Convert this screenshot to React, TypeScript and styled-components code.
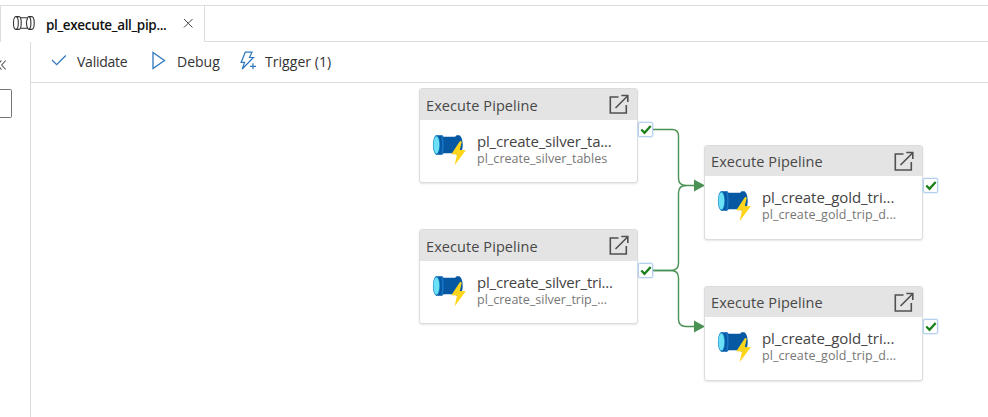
import React from "react";
import styled, { createGlobalStyle } from "styled-components";

const GlobalStyle = createGlobalStyle`
  * { box-sizing: border-box; }
  body { margin: 0; background: #fff; font-family: "Open Sans", "Noto Sans", sans-serif; }
`;

const Page = styled.div`
  display: flex;
  flex-direction: column;
  width: 988px;
  height: 417px;
  padding-top: 5px;
  overflow: hidden;
  background: #fff;
`;
const TabBar = styled.div`
  display: flex;
  height: 37px;
  border-top: 1px solid #dcdcdc;
`;
const Tab = styled.div`
  display: flex;
  align-items: center;
  width: 205px;
  padding: 0 0 2px 11px;
  border: solid #dcdcdc;
  border-width: 0 1px;
`;
const TabTitle = styled.span`
  width: 137px;
  margin-left: 10px;
  padding-top: 3px;
  font-size: 13.5px;
  font-weight: 600;
  letter-spacing: -0.35px;
  line-height: 20px;
  white-space: nowrap;
  color: #111;
`;
const TabFill = styled.div`
  flex: 1;
  border-bottom: 1px solid #dcdcdc;
`;
const Body = styled.div`
  display: flex;
  flex: 1;
`;
const SidePanel = styled.div`
  display: flex;
  flex-direction: column;
  width: 31px;
  padding-top: 18px;
  border-right: 1px solid #dcdcdc;
`;
const SearchBox = styled.div`
  width: 12px;
  height: 29px;
  margin-top: 19px;
  border: 1px solid #76747a;
  border-left: 0;
  border-radius: 0 2px 2px 0;
`;
const Main = styled.div`
  display: flex;
  flex: 1;
  flex-direction: column;
`;
const Toolbar = styled.div`
  display: flex;
  align-items: center;
  height: 41px;
  padding: 0 0 2px 18px;
  border-bottom: 1px solid #dcdcdc;
`;
const ToolButton = styled.div<{ $width: number }>`
  display: flex;
  align-items: center;
  width: ${(p) => p.$width}px;
`;
const ToolLabel = styled.span<{ $spacing: number; $gap: number }>`
  margin-left: ${(p) => p.$gap}px;
  padding-top: 2px;
  font-size: 14px;
  letter-spacing: ${(p) => p.$spacing}px;
  line-height: 20px;
  white-space: nowrap;
  color: #333;
`;
const Canvas = styled.div`
  position: relative;
  flex: 1;
`;
const Wires = styled.svg`
  position: absolute;
  left: 0;
  top: 0;
`;
const Node = styled.div<{ $x: number; $y: number }>`
  position: absolute;
  left: ${(p) => p.$x}px;
  top: ${(p) => p.$y}px;
  width: 219px;
  height: 95px;
  border: 1px solid #dcdcdc;
  border-radius: 3px;
  background: #fff;
  box-shadow: 0 1px 2px rgba(0, 0, 0, 0.1);
`;
const NodeHeader = styled.div<{ $height: number }>`
  display: flex;
  align-items: center;
  justify-content: space-between;
  height: ${(p) => p.$height}px;
  padding: 0 7px 1px 6px;
  border-radius: 2px 2px 0 0;
  background: #e4e4e4;
`;
const NodeType = styled.span`
  padding-top: 3px;
  font-size: 14.5px;
  letter-spacing: 0.08px;
  line-height: 20px;
  white-space: nowrap;
  color: #484848;
`;
const NodeBody = styled.div<{ $top: number }>`
  display: flex;
  padding: ${(p) => p.$top}px 0 0 12px;
`;
const NodeText = styled.div`
  display: flex;
  flex-direction: column;
  margin-left: 11px;
`;
const NodeName = styled.span<{ $spacing: number }>`
  font-size: 15px;
  letter-spacing: ${(p) => p.$spacing}px;
  line-height: 18px;
  white-space: nowrap;
  color: #444;
`;
const NodeTarget = styled.span<{ $spacing: number }>`
  margin-top: 1px;
  font-size: 12.5px;
  letter-spacing: ${(p) => p.$spacing}px;
  line-height: 16px;
  white-space: nowrap;
  color: #777;
`;
const Port = styled.div<{ $top: number }>`
  position: absolute;
  left: 218px;
  top: ${(p) => p.$top}px;
  display: flex;
  align-items: center;
  justify-content: center;
  width: 15px;
  height: 15px;
  border: 1px solid #b4d0ee;
  border-radius: 2px;
  background: #fff;
  box-shadow: 0 0 2px #a9cbf0;
`;

const PipelineIcon = () => (
  <svg width="24" height="16" viewBox="0 0 24 16" fill="none" stroke="#333" strokeWidth="1.1">
    <ellipse cx="3.900" cy="8" rx="2.400" ry="6.400" />
    <path d="M3.900 1.600h3c1.500 0 2.300 2.900 2.300 6.400s-.8 6.400-2.300 6.400h-3M8.500 2.700h7.200M8.500 13.300h7.200M15.700 2.700c-1.400 3-1.400 7.600 0 10.600M16.900 1.600h2.700c1.600 0 2.600 2.900 2.600 6.400s-1 6.400-2.600 6.400h-2.700c1.300-.7 2-3.300 2-6.400s-.7-5.700-2-6.400c-.6.2-1 .5-1.200 1.100M15.700 13.300c.3.600.6.900 1.200 1.100" />
  </svg>
);
const CloseIcon = () => (
  <svg width="11" height="11" viewBox="0 0 11 11" stroke="#444" strokeWidth="1">
    <path d="M1 1l8.500 8.500M9.500 1L1 9.500" />
  </svg>
);
const CollapseIcon = () => (
  <svg width="8" height="10" viewBox="0 0 8 10" fill="none" stroke="#555" strokeWidth="1.100">
    <path d="M1.500 .5L-2.500 5l4 4.500M5.700.5L1.700 5l4 4.500" />
  </svg>
);
const CheckIcon = () => (
  <svg width="20" height="20" viewBox="0 0 20 20" fill="none" stroke="#3678bd" strokeWidth="1.300">
    <path d="M3 9l4.700 4.700L16.800 4.500" />
  </svg>
);
const PlayIcon = () => (
  <svg width="20" height="20" viewBox="0 0 20 20" fill="none" stroke="#2f77bd" strokeWidth="1.300">
    <path d="M5 1.500v16L16.500 9.500z" />
  </svg>
);
const TriggerIcon = () => (
  <svg width="20" height="20" viewBox="0 0 20 20" fill="none" stroke="#2f77bd" strokeWidth="1.200">
    <path d="M7.300 1.200h6.700L11.500 6.500h3.900L4.200 18l2.400-6.600H3.100zM15 12.300v6M12 15.300h6" />
  </svg>
);
const OpenIcon = () => (
  <svg width="22" height="22" viewBox="0 0 22 22" fill="none" stroke="#505050" strokeWidth="1.600">
    <path d="M10.500 4H2.300v16h16v-8M7.500 15L19.800 2.700M13.300 2.500h6.500v6.500" />
  </svg>
);
const ActivityIcon = () => (
  <svg width="34" height="34" viewBox="0 0 34 34">
    <path fill="#0758a2" d="M4 3.200h5.500c1 0 1.600.5 1.900 1.500h12c.3-1 .8-1.500 1.800-1.500h2.300c2.600 2 3.200 6 3.200 9.800s-.8 7.800-3.200 9.700h-2.300c-1 0-1.500-.4-1.800-1.400h-12c-.3 1-.9 1.400-1.900 1.400H4z" />
    <path fill="#1977c8" d="M9 3.200h.5c1 0 1.500 1 1.700 3 .5 3.500.5 9.300 0 13-.3 2-.7 3.500-1.700 3.500H9c1.500-5 1.500-14.500 0-19.500z" />
    <ellipse cx="4.500" cy="12.900" rx="3.600" ry="9.800" fill="#1480c5" />
    <ellipse cx="4.400" cy="12.900" rx="2.900" ry="8.700" fill="#6ce1f5" />
    <path fill="#ffd51c" d="M28 9L19.300 22.300l5.700.2-2.400 10.700L33.800 18.300l-6-.4 2-8.500z" />
  </svg>
);
const PortCheck = () => (
  <svg width="12" height="10" viewBox="0 0 12 10" fill="none" stroke="#198019" strokeWidth="2.300">
    <path d="M1.300 4.500l3.200 3.300L10.700 1" />
  </svg>
);

interface Activity {
  x: number;
  y: number;
  headerHeight: number;
  portTop: number;
  name: string;
  nameSpacing: number;
  target: string;
  targetSpacing: number;
}
const activities: Activity[] = [
  { x: 388, y: 5, headerHeight: 31, portTop: 33, name: "pl_create_silver_ta...", nameSpacing: -0.19, target: "pl_create_silver_tables", targetSpacing: 0.03 },
  { x: 388, y: 146, headerHeight: 31, portTop: 33, name: "pl_create_silver_tri...", nameSpacing: -0.2, target: "pl_create_silver_trip_...", targetSpacing: 0 },
  { x: 673, y: 62, headerHeight: 30, portTop: 32, name: "pl_create_gold_tri...", nameSpacing: -0.07, target: "pl_create_gold_trip_d...", targetSpacing: 0.08 },
  { x: 673, y: 203, headerHeight: 30, portTop: 32, name: "pl_create_gold_tri...", nameSpacing: -0.07, target: "pl_create_gold_trip_d...", targetSpacing: 0.08 },
];

const ActivityNode = ({ activity: a }: { activity: Activity }) => (
  <Node $x={a.x} $y={a.y}>
    <NodeHeader $height={a.headerHeight}>
      <NodeType>Execute Pipeline</NodeType>
      <OpenIcon />
    </NodeHeader>
    <NodeBody $top={12}>
      <ActivityIcon />
      <NodeText>
        <NodeName $spacing={a.nameSpacing}>{a.name}</NodeName>
        <NodeTarget $spacing={a.targetSpacing}>{a.target}</NodeTarget>
      </NodeText>
    </NodeBody>
    <Port $top={a.portTop}><PortCheck /></Port>
  </Node>
);

export default function App() {
  return (
    <Page>
      <GlobalStyle />
      <TabBar>
        <Tab>
          <PipelineIcon />
          <TabTitle>pl_execute_all_pip...</TabTitle>
          <CloseIcon />
        </Tab>
        <TabFill />
      </TabBar>
      <Body>
        <SidePanel>
          <CollapseIcon />
          <SearchBox />
        </SidePanel>
        <Main>
          <Toolbar>
            <ToolButton $width={99}><CheckIcon /><ToolLabel $spacing={-0.25} $gap={8}>Validate</ToolLabel></ToolButton>
            <ToolButton $width={90}><PlayIcon /><ToolLabel $spacing={0} $gap={9}>Debug</ToolLabel></ToolButton>
            <ToolButton $width={100}><TriggerIcon /><ToolLabel $spacing={0.05} $gap={7}>Trigger (1)</ToolLabel></ToolButton>
          </Toolbar>
          <Canvas>
            <Wires width="957" height="334" viewBox="31 83 957 334" fill="none" stroke="#499254" strokeWidth="1.400">
              <path d="M652 129.500H672Q678.500 129.500 678.500 136V178Q678.500 185.500 686 185.500H695" />
              <path d="M652 270.500H671Q678.500 270.500 678.500 263V193Q678.500 185.500 686 185.500" />
              <path d="M652 270.500H671Q678.500 270.500 678.500 278V319Q678.500 326.500 686 326.500H695" />
              <path d="M694 179.500v12l11-6zM694 320.500v12l11-6z" fill="#499254" stroke="none" />
            </Wires>
            {activities.map((a) => <ActivityNode key={`${a.x}-${a.y}`} activity={a} />)}
          </Canvas>
        </Main>
      </Body>
    </Page>
  );
}
